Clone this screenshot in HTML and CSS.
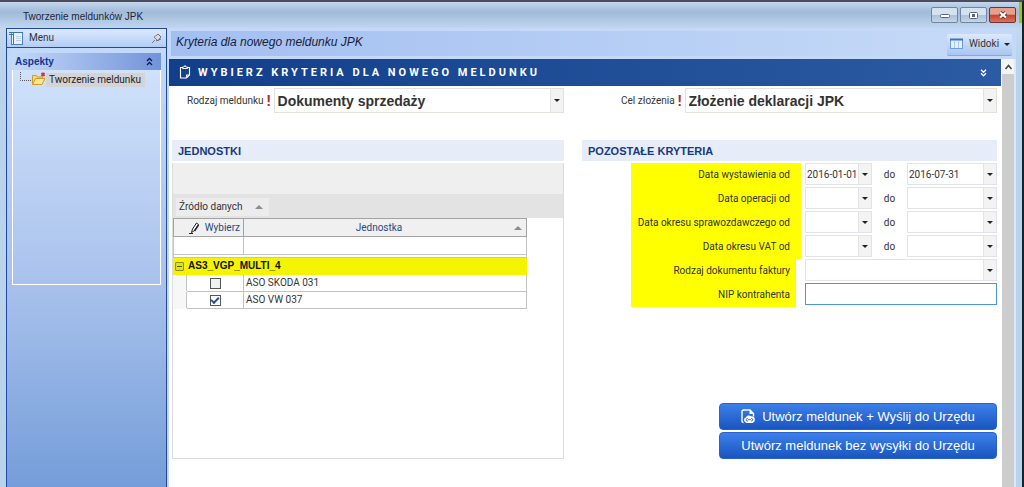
FILE: index.html
```html
<!DOCTYPE html>
<html lang="pl">
<head>
<meta charset="utf-8">
<title>Tworzenie meldunków JPK</title>
<link rel="stylesheet" href="styles.css">
</head>
<body>
<div class="window">
  <header class="titlebar">
    <h1 class="title">Tworzenie meldunków JPK</h1>
    <div class="win-buttons">
      <button class="win-btn" aria-label="Minimalizuj"><svg width="12" height="8" viewBox="0 0 12 8"><rect x="1.5" y="3.500" width="9" height="3" rx="1" fill="#fff" stroke="#5b6675"/></svg></button>
      <button class="win-btn" aria-label="Maksymalizuj"><svg width="11" height="9" viewBox="0 0 11 9"><rect x="1.500" y="1.500" width="8" height="6" rx="1" fill="#fff" stroke="#5b6675"/><rect x="4" y="3" width="3" height="3" fill="#5b6675"/></svg></button>
      <button class="win-btn win-close" aria-label="Zamknij"><svg width="14" height="12" viewBox="0 0 14 12"><path d="M4 3.500l6 5M10 3.500l-6 5" stroke="#6b3434" stroke-width="4"/><path d="M4 3.500l6 5M10 3.500l-6 5" stroke="#fff" stroke-width="2.200"/></svg></button>
    </div>
  </header>
  <div class="body">
    <nav class="sidebar">
      <div class="menu-head">
        <svg width="16" height="15" viewBox="0 0 16 15"><rect x="2.500" y="1.500" width="11" height="12" fill="#e9f2ff" stroke="#4f80c9"/><path d="M0 1.500h14M4.500 2v11M0 3.500h4" stroke="#3e72c4"/><path d="M7 5.500h5M7 7.500h5M7 9.500h5" stroke="#b6d0f2"/></svg>
        <span>Menu</span>
        <svg class="pin" width="11" height="11" viewBox="0 0 11 11"><path d="M1 10l3-3M3 4l4 4c1-1 1-2 1-2l2-2-3-3-2 2s-1 0-2 1z" fill="#ddd" stroke="#7c7c84"/><path d="M7 1l3 3M5 8l5-2" stroke="#66666f"/></svg>
      </div>
      <section class="group">
        <h2 class="group-head">Aspekty <svg width="7" height="9" viewBox="0 0 7 9"><path d="M1 4l2.500-2.500 2.500 2.500M1 8l2.500-2.500 2.500 2.500" fill="none" stroke="#071a55" stroke-width="1.300"/></svg></h2>
        <div class="group-body">
          <a class="tree-item" href="#">
            <svg width="26" height="15" viewBox="0 0 26 15"><path d="M.5 0v8.500H12" fill="none" stroke="#555" stroke-dasharray="1 1"/><path d="M12.500 12.500v-9h4l1 1.500h5v3" fill="#f6d779" stroke="#d09c28"/><path d="M12.500 12.500l3-6h9.500l-3 6z" fill="#ffe48f" stroke="#d09c28"/><path d="M21.500 1l3 3M24.500 1l-3 3" stroke="#e02d2d" stroke-width="1.800"/></svg>
            <span>Tworzenie meldunku</span>
          </a>
        </div>
      </section>
    </nav>
    <main class="main">
      <div class="topbar">
        <p class="crumb">Kryteria dla nowego meldunku JPK</p>
        <button class="views"><svg width="14" height="12" viewBox="0 0 14 12"><rect x=".5" y="1.500" width="12" height="9" fill="#e6f1ff" stroke="#6b9ce0"/><path d="M0 1.500h13" stroke="#3b71c6" stroke-width="2"/><path d="M4.500 3v7M8.500 3v7" stroke="#a9c9f2"/></svg>Widoki<i class="tri"></i></button>
      </div>
      <div class="view">
        <div class="page">
          <h2 class="banner">
            <svg width="12" height="15" viewBox="0 0 12 15"><path d="M3.500 2.500h-2v10.500h6l3-3v-7.500h-2M7.500 13v-3h3" fill="none" stroke="#fff" stroke-width="1.100"/><path d="M3.500 3.500v-1.500h1.500l1-1.500 1 1.500h1.500v1.500z" fill="none" stroke="#fff"/></svg>
            <span>WYBIERZ KRYTERIA DLA NOWEGO MELDUNKU</span>
            <svg class="banner-toggle" width="7" height="8" viewBox="0 0 7 8"><path d="M1 .8l2.500 2.500 2.500-2.500M1 4.300l2.500 2.500 2.500-2.500" fill="none" stroke="#fff" stroke-width="1.300"/></svg>
          </h2>
          <div class="content">
            <div class="col">
              <div class="required">
                <label for="kind">Rodzaj meldunku</label><b class="bang">!</b>
                <span class="combo big"><select id="kind"><option>Dokumenty sprzedaży</option></select><span class="drop"><i class="tri"></i></span></span>
              </div>
              <section class="units">
                <h3 class="section">JEDNOSTKI</h3>
                <div class="grid-box">
                  <div class="grid-top"></div>
                  <div class="grid-group"><button class="chip">Źródło danych<i class="sort"></i></button></div>
                  <table class="table">
                    <colgroup><col class="c-indent"><col class="c-pick"><col></colgroup>
                    <thead>
                      <tr>
                        <th colspan="2" class="th-pick"><span class="pick"><svg width="11" height="12" viewBox="0 0 11 12"><path d="M0 11.500h4" stroke="#222"/><path d="M2.500 10.500l1-3.500 4-6 2 1.500-4 6z" fill="#fff" stroke="#222"/><path d="M5.500 9l4-6" stroke="#222" stroke-width="1.400"/></svg>Wybierz</span></th>
                        <th><span class="th-unit"><span>Jednostka</span><i class="sort"></i></span></th>
                      </tr>
                    </thead>
                    <tbody>
                      <tr class="filter"><td colspan="2"></td><td></td></tr>
                      <tr class="spacer"><td colspan="3"></td></tr>
                      <tr class="group-row"><td colspan="3"><div class="group-cell"><button class="minus" aria-label="Zwiń"></button>AS3_VGP_MULTI_4</div></td></tr>
                      <tr><td class="indent"></td><td class="check"><input type="checkbox" id="u1" aria-labelledby="n1"></td><td><label for="u1" id="n1">ASO SKODA 031</label></td></tr>
                      <tr><td class="indent"></td><td class="check"><input type="checkbox" id="u2" aria-labelledby="n2" checked></td><td><label for="u2" id="n2">ASO VW 037</label></td></tr>
                    </tbody>
                  </table>
                </div>
              </section>
            </div>
            <div class="col">
              <div class="required second">
                <label for="goal">Cel złożenia</label><b class="bang">!</b>
                <span class="combo big"><select id="goal"><option>Złożenie deklaracji JPK</option></select><span class="drop"><i class="tri"></i></span></span>
              </div>
              <section class="others">
                <h3 class="section">POZOSTAŁE KRYTERIA</h3>
                <div class="fields">
                  <label class="mark" for="a1">Data wystawienia od</label><span class="combo"><input id="a1" type="text" value="2016-01-01"><button class="drop" aria-label="Kalendarz"><i class="tri"></i></button></span><label class="to" for="a2">do</label><span class="combo"><input id="a2" type="text" value="2016-07-31"><button class="drop" aria-label="Kalendarz"><i class="tri"></i></button></span>
                  <label class="mark" for="b1">Data operacji od</label><span class="combo"><input id="b1" type="text"><button class="drop" aria-label="Kalendarz"><i class="tri"></i></button></span><label class="to" for="b2">do</label><span class="combo"><input id="b2" type="text"><button class="drop" aria-label="Kalendarz"><i class="tri"></i></button></span>
                  <label class="mark" for="c1">Data okresu sprawozdawczego od</label><span class="combo"><input id="c1" type="text"><button class="drop" aria-label="Kalendarz"><i class="tri"></i></button></span><label class="to" for="c2">do</label><span class="combo"><input id="c2" type="text"><button class="drop" aria-label="Kalendarz"><i class="tri"></i></button></span>
                  <label class="mark" for="d1">Data okresu VAT od</label><span class="combo"><input id="d1" type="text"><button class="drop" aria-label="Kalendarz"><i class="tri"></i></button></span><label class="to" for="d2">do</label><span class="combo"><input id="d2" type="text"><button class="drop" aria-label="Kalendarz"><i class="tri"></i></button></span>
                  <label class="mark short" for="e1">Rodzaj dokumentu faktury</label><span class="combo wide"><select id="e1"><option></option></select><span class="drop"><i class="tri"></i></span></span>
                  <label class="mark short" for="f1">NIP kontrahenta</label><span class="combo wide active"><input id="f1" type="text"></span>
                </div>
              </section>
              <div class="actions">
                <button class="action"><svg width="14" height="15" viewBox="0 0 14 15"><path d="M2.500 13.500c-1 0-1.500-.5-1.500-1.500v-9.500c0-1 .5-1.500 1.500-1.500h6.500l3.500 3.500v3" fill="none" stroke="#fff" stroke-width="1.400"/><path d="M8.500 1v4h4z" fill="#fff"/><path d="M5.500 14a3 3 0 0 1-.5-5.800 3.300 3.300 0 0 1 5-1 3.500 3.500 0 0 1 1.500 6.800z" fill="#fff"/><path d="M7 9.500h-.5a1.200 1.200 0 0 0 0 2.400h.5M10 9.500h.5a1.200 1.200 0 0 1 0 2.400h-.5M7 10.700h3" fill="none" stroke="#2f69cf"/></svg>Utwórz meldunek + Wyślij do Urzędu</button>
                <button class="action">Utwórz meldunek bez wysyłki do Urzędu</button>
              </div>
            </div>
          </div>
        </div>
        <div class="scroll"><button class="scroll-up" aria-label="W górę"><svg width="9" height="6" viewBox="0 0 9 6"><path d="M1.500 5l3-3.500 3 3.500" fill="none" stroke="#444" stroke-width="1.600"/></svg></button></div>
      </div>
    </main>
  </div>
</div>
</body>
</html>
```
FILE: styles.css
```css
* { box-sizing: border-box; }
body {
  margin: 0;
  font: 10px/14px Roboto, "Liberation Sans", sans-serif;
  color: #333;
}
button, input, select {
  font: inherit;
  color: inherit;
  margin: 0;
  padding: 0;
  border: 0;
  background: none;
  border-radius: 0;
  appearance: none;
  min-width: 0;
}
h1, h2, h3, p { margin: 0; font-size: inherit; font-weight: normal; }
svg { flex: none; display: block; }

.window {
  min-height: 100vh;
  display: flex;
  flex-direction: column;
  padding: 0 6px 0 6px;
  border-top: 2px solid #4b4d5c;
  border-right: 2px solid #12232e;
  background:
    linear-gradient(#9dc41c, #9dc41c) right top / 3px 21px no-repeat,
    linear-gradient(#c4d7ec, #a0bad9 10px, #c3d8ef 27px, #b9d3ea 60px, #b9d3ea);
}
.titlebar {
  height: 26px;
  display: flex;
  align-items: center;
  justify-content: space-between;
  padding-left: 17px;
}
.title { font: 10px/14px "Liberation Sans", Arial, sans-serif; padding-top: 4px; color: #1c2533; }
.win-buttons { display: flex; gap: 2px; }
.win-btn {
  width: 27px;
  height: 16px;
  display: grid;
  place-items: center;
  border: 1px solid #71859f;
  border-radius: 2px;
  background: linear-gradient(#d4e1f0 50%, #a8bfdb 50%, #c3d5ea);
}
.win-close {
  border-color: #6e3436;
  background: linear-gradient(#e5a08f 45%, #c8412a 50%, #d8745c);
}
.body { flex: 1; display: flex; }

.sidebar {
  width: 161px;
  flex: none;
  border: 1px solid #2148a8;
  border-bottom: 0;
  background: linear-gradient(#c5dbfb, #a9c2ec 55%, #759dd9);
}
.menu-head {
  height: 19px;
  display: flex;
  align-items: center;
  gap: 4px;
  padding: 0 4px 0 2px;
  border-bottom: 1px solid #2148a8;
  background: linear-gradient(#dceaff, #b2cdf5);
}
.pin { margin-left: auto; }
.group { margin: 5px 5px 0; }
.group-head {
  height: 17px;
  display: flex;
  align-items: center;
  justify-content: space-between;
  padding: 0 8px 0 3px;
  color: #12358f;
  font: bold 10px/14px "Liberation Sans", Arial, sans-serif;
  background: linear-gradient(90deg, #c5d9f8, #7193da);
}
.group-body {
  height: 215px;
  padding: 2px 0 0 7px;
  border: 1px solid #fff;
  border-top: 0;
  background: linear-gradient(#cfe1fb, #a9c2ec);
}
.tree-item {
  display: flex;
  align-items: center;
  color: #222;
  text-decoration: none;
}
.tree-item span { padding: 0 4px 0 3px; background: #d4d4d6; }

.main { flex: 1; min-width: 0; display: flex; flex-direction: column; }
.topbar {
  height: 31px;
  display: flex;
  align-items: center;
  justify-content: space-between;
  padding: 0 4px;
  background: #c4d9f7;
}
.crumb {
  flex: 1;
  height: 25px;
  padding-left: 5px;
  font: italic 12px/22px "Liberation Sans", Arial, sans-serif;
  color: #16213c;
  background: linear-gradient(90deg, #a3bff1, #c4d9f7);
}
.views {
  width: 65px;
  height: 22px;
  margin-top: 2px;
  display: flex;
  align-items: center;
  justify-content: space-between;
  padding: 0 2px 0 3px;
  border-bottom: 1px solid #86a8dd;
  border-radius: 2px;
  background: linear-gradient(#dce9fc, #a9c5f0);
}
.tri {
  border: 3px solid transparent;
  border-top-color: #222;
  border-bottom: 0;
}
.sort {
  border: 4px solid transparent;
  border-bottom-color: #8c8c8c;
  border-top: 0;
}
.view { flex: 1; display: flex; background: #fff; border-left: 2px solid #c4d9f7; }
.page { flex: 1; min-width: 0; display: flex; flex-direction: column; }
.scroll { width: 15px; background: #cdcdcd; border-left: 1px solid #fff; border-right: 2px solid #dce8f7; }
.scroll-up { width: 100%; height: 15px; display: grid; place-items: center; background: #f5f5f5; }

.banner {
  height: 27px;
  display: flex;
  align-items: center;
  gap: 7px;
  padding: 0 14px 0 10px;
  font: bold 11px/14px Roboto, "Liberation Sans", sans-serif;
  letter-spacing: 3px;
  color: #fff;
  background: linear-gradient(90deg, #133f8a, #2b5ba3);
}
.banner-toggle { margin-left: auto; }
.content {
  flex: 1;
  display: grid;
  grid-template-columns: 392fr 415fr;
  gap: 18px;
  padding: 2px 4px 28px 3px;
}
.col { display: flex; flex-direction: column; min-width: 0; }
.required {
  height: 25px;
  display: flex;
  align-items: center;
  margin: 0 0 27px 15px;
}
.second { margin-left: 39px; }
.bang {
  width: 10px;
  text-align: center;
  color: #c0202c;
  font-size: 14px;
}
.combo {
  display: grid;
  grid-template-columns: 1fr 13px;
  height: 22px;
  border: 1px solid #e0e3ea;
  background: #fff;
}
.combo select { grid-area: 1 / 1 / 2 / 3; padding-left: 3px; }
.combo input { padding: 2px 0 0 1px; outline: none; }
.combo .drop {
  grid-area: 1 / 2;
  display: grid;
  place-items: center;
  border-left: 1px solid #e4e4e4;
  background: #f3f3f3;
  pointer-events: none;
}
.combo.big {
  flex: 1;
  height: 25px;
  border-color: #e2e2dc;
  font: bold 14px/20px "Liberation Sans", Arial, sans-serif;
}
.section {
  height: 21px;
  padding-left: 6px;
  font: bold 11px/22px "Liberation Sans", Arial, sans-serif;
  color: #153a80;
  background: #e7edf8;
}
.units { flex: 1; display: flex; flex-direction: column; gap: 2px; }
.grid-box { flex: 1; border: 1px solid #dcdcdc; border-top: 0; }
.grid-top { height: 31px; background: #efefef; }
.grid-group { height: 24px; padding: 4px 3px; background: #e3e3e3; }
.chip {
  height: 18px;
  display: flex;
  align-items: center;
  gap: 12px;
  padding: 0 6px 0 3px;
  background: #ececec;
}
.table {
  width: calc(100% - 36px);
  table-layout: fixed;
  border-collapse: collapse;
}
.c-indent { width: 13px; }
.c-pick { width: 57px; }
.table th, .table td { height: 17px; padding: 0; border: 1px solid #c3c3c3; line-height: 14px; }
.table th {
  height: 18px;
  border-color: #a3a3a3;
  font-weight: normal;
  color: #1e4987;
  background: #f0f0f0;
}
.table .filter td { height: 18px; }
.pick { display: flex; align-items: center; justify-content: flex-end; gap: 5px; padding-right: 3px; }
.th-unit { display: flex; align-items: center; padding-right: 4px; }
.th-unit span { flex: 1; }
.table .spacer td { height: 3px; line-height: 0; }
.table .group-row td { border-color: #f4f400; background: #f4f400; }
.group-cell { display: flex; align-items: center; gap: 4px; padding-left: 1px; font: bold 10px/14px "Liberation Sans", Arial, sans-serif; color: #111; }
.minus {
  width: 9px;
  height: 9px;
  display: grid;
  place-items: center;
  border: 1px solid #8c8c2c;
  border-radius: 1px;
  background: #dede28;
}
.minus::before { content: ""; width: 5px; height: 1px; background: #555500; }
.table .indent { background: #f7f7f7; border-color: #f7f7f7 #c3c3c3 #f7f7f7 #f7f7f7; }
.table .check { text-align: center; line-height: 0; }
.table label { padding-left: 2px; }
.check input {
  width: 11px;
  height: 11px;
  display: inline-grid;
  place-items: center;
  border: 1px solid #555;
  background: #f0f0f0;
}
.check input:checked { background: #fff; }
.check input:checked::before {
  content: "";
  width: 6px;
  height: 3px;
  border: solid #1f4f9d;
  border-width: 0 0 2px 2px;
  rotate: -45deg;
  margin-bottom: 2px;
}
.others { display: grid; gap: 2px; }
.fields {
  display: grid;
  grid-template-columns: 1fr 67px 35px 90px;
  grid-auto-rows: 24px;
  align-items: start;
  padding-left: 49px;
}
.mark {
  align-self: stretch;
  margin-right: 4px;
  padding-right: 11px;
  line-height: 23px;
  text-align: right;
  background: #ff0;
}
.short { margin-right: 9px; padding-right: 6px; }
.to { text-align: center; line-height: 23px; }
.wide { grid-column: span 3; }
.active { border-color: #4c94de; grid-template-columns: 1fr; }
.actions {
  width: 278px;
  margin: auto 0 0 auto;
  display: grid;
  gap: 2px;
}
.action {
  height: 27px;
  display: flex;
  align-items: center;
  justify-content: center;
  gap: 7px;
  border: 1px solid #2a62cb;
  border-radius: 4px;
  font: 13px/18px "Liberation Sans", Arial, sans-serif;
  color: #fff;
  background: linear-gradient(#3d80ea, #1955c0);
}
```
